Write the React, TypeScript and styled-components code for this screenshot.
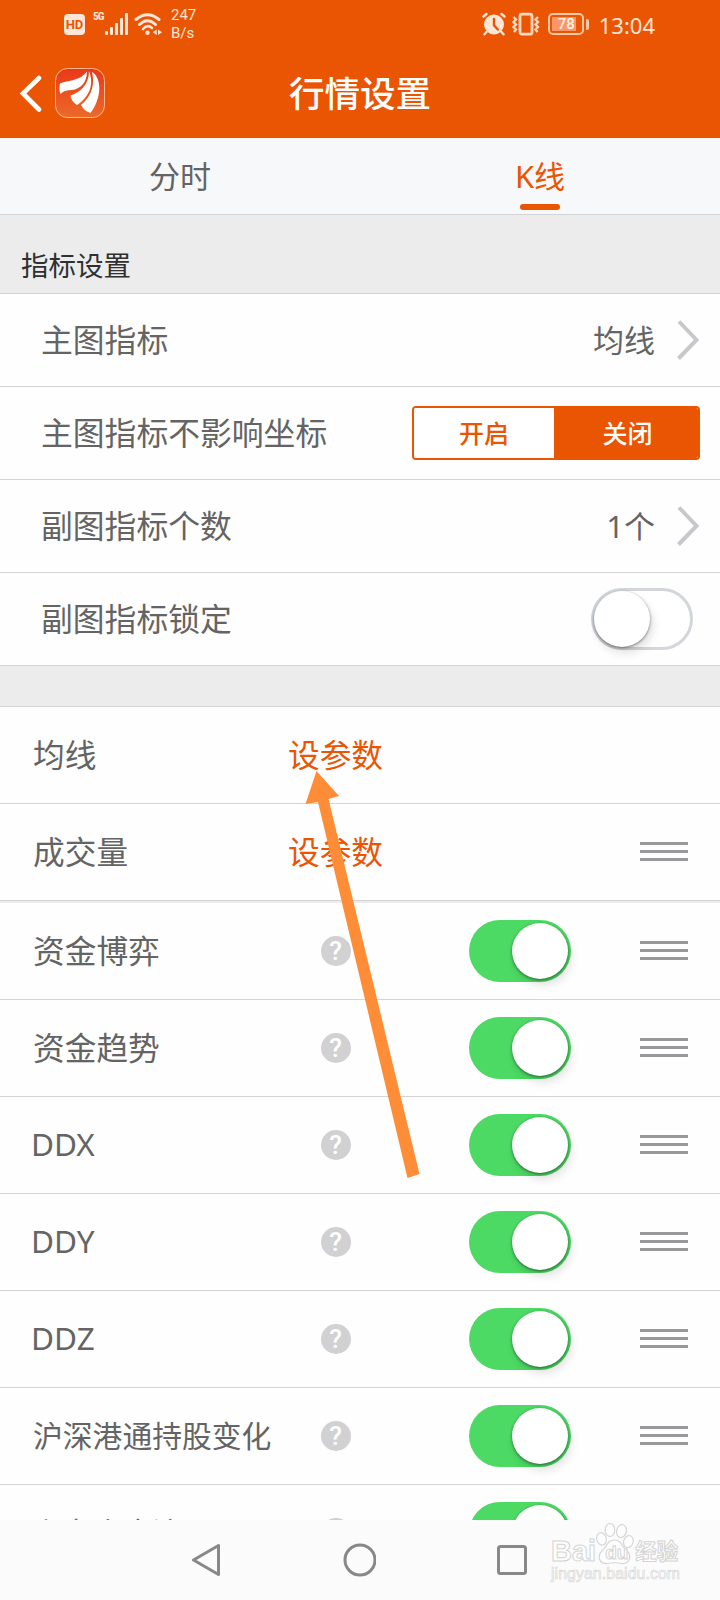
import React from "react";
import styled, { createGlobalStyle } from "styled-components";

const ORANGE = "#ea5504";
const LINE = "#d4d4d6";

const GlobalStyle = createGlobalStyle`
  * { box-sizing: border-box; }
  body {
    margin: 0;
    background: #fff;
    font-family: "Noto Sans", "Noto Sans CJK SC", sans-serif;
    color: #646464;
  }
`;

const Screen = styled.div`
  position: relative;
  display: flex;
  flex-direction: column;
  width: 720px;
  height: 1600px;
  overflow: hidden;
  background: #fefefe;
`;

const Header = styled.header`
  height: 138px;
  flex: none;
  background: ${ORANGE};
  color: #fff;
`;

const StatusBar = styled.div`
  display: flex;
  align-items: center;
  justify-content: space-between;
  height: 48px;
  padding: 0 65px 0 63px;
  color: #ffe6d6;
`;

const StatusGroup = styled.div`
  display: flex;
  align-items: center;
`;

const HdBadge = styled.span`
  width: 21px;
  height: 21px;
  margin: 1px 8px 0 1px;
  border-radius: 4px;
  background: #ffe6d6;
  color: ${ORANGE};
  font: 700 13px/22px Roboto, sans-serif;
  text-align: center;
`;

const NetworkType = styled.span`
  width: 12px;
  align-self: flex-start;
  padding-top: 4px;
  font: 700 11.5px/12px "Roboto Condensed", Roboto, sans-serif;
  letter-spacing: -1px;
`;

const Speed = styled.span`
  margin-left: 9px;
  font: 400 15px/18px Roboto, sans-serif;
`;

const Battery = styled.span`
  position: relative;
  display: flex;
  width: 36px;
  height: 22px;
  margin-left: 8px;
  padding: 2px;
  border: 2px solid #ffc7a6;
  border-radius: 5px;
  &::after {
    content: "";
    position: absolute;
    right: -7px;
    top: 4px;
    width: 3px;
    height: 11px;
    border-radius: 0 2px 2px 0;
    background: #ffc7a6;
  }
`;

const BatteryLevel = styled.span`
  width: 24px;
  height: 14px;
  background: #fb9668;
  color: #fff0e5;
  font: 500 15px/14px Roboto, sans-serif;
  text-indent: 6px;
  white-space: nowrap;
`;

const Clock = styled.span`
  margin-left: 15px;
  font-size: 22px;
  line-height: 30px;
  padding-top: 1px;
`;

const TitleBar = styled.div`
  display: grid;
  grid-template-columns: 110px 1fr 110px;
  align-items: center;
  height: 90px;
`;

const TitleLeft = styled.div`
  display: flex;
  align-items: center;
  gap: 12px;
  padding-left: 19px;
`;

const Title = styled.h1`
  margin: 0;
  font-size: 35.5px;
  font-weight: 500;
  line-height: 46px;
  text-align: center;
`;

const Tabs = styled.nav`
  display: grid;
  grid-template-columns: 1fr 1fr;
  flex: none;
  height: 77px;
  border-bottom: 1px solid ${LINE};
  background: #f7f8fa;
`;

const Tab = styled.div<{ $active?: boolean }>`
  display: flex;
  flex-direction: column;
  align-items: center;
  justify-content: space-between;
  padding: 17px 0 4px;
  color: ${(p) => (p.$active ? ORANGE : "#646464")};
  font-size: 31px;
  line-height: 42px;
  &::after {
    content: "";
    width: 40px;
    height: 6px;
    border-radius: 3px;
    background: ${(p) => (p.$active ? ORANGE : "transparent")};
  }
`;

const SectionHeader = styled.h2`
  flex: none;
  height: 79px;
  margin: 0;
  padding: 32px 21px 0;
  border-bottom: 1px solid ${LINE};
  background: #ececec;
  color: #303030;
  font-size: 27.5px;
  font-weight: 400;
  line-height: 38px;
`;

const SettingRow = styled.div`
  display: flex;
  align-items: center;
  justify-content: space-between;
  flex: none;
  height: 93px;
  padding: 0 20px 0 41px;
  border-bottom: 1px solid ${LINE};
  font-size: 31.8px;
  line-height: 46px;
`;

const Value = styled.div`
  display: flex;
  align-items: center;
  gap: 21px;
  font-size: 31px;
`;

const Segmented = styled.div`
  display: grid;
  grid-template-columns: 140px 1fr;
  width: 288px;
  height: 54px;
  border: 2px solid ${ORANGE};
  border-radius: 4px;
  overflow: hidden;
`;

const Segment = styled.div<{ $on?: boolean }>`
  display: flex;
  align-items: center;
  justify-content: center;
  padding-left: ${(p) => (p.$on ? 3 : 0)}px;
  background: ${(p) => (p.$on ? ORANGE : "#fff")};
  color: ${(p) => (p.$on ? "#fff" : ORANGE)};
  font-size: 25px;
  font-weight: 500;
  line-height: 36px;
`;

const Switch = styled.div<{ $on?: boolean }>`
  display: flex;
  justify-content: ${(p) => (p.$on ? "flex-end" : "flex-start")};
  width: 102px;
  height: 62px;
  padding: ${(p) => (p.$on ? "3px" : "0")};
  border: ${(p) => (p.$on ? "none" : "3px solid #d3d6da")};
  border-radius: 31px;
  background: ${(p) => (p.$on ? "#4cd964" : "#fff")};
`;

const Knob = styled.div`
  width: 56px;
  height: 56px;
  border-radius: 50%;
  background: #fff;
  box-shadow: 0 1px 3px rgba(0, 0, 0, 0.48), 3px 6px 10px rgba(0, 0, 0, 0.12);
`;

const SwitchSlot = styled.div`
  margin-right: 7px;
`;

const Divider = styled.div<{ $size: number }>`
  flex: none;
  height: ${(p) => p.$size}px;
  border-bottom: ${(p) => (p.$size > 10 ? `1px solid ${LINE}` : "none")};
  background: #ececec;
`;

const IndicatorRow = styled.div`
  display: grid;
  grid-template-columns: 242px 123px 1fr 48px;
  align-items: center;
  flex: none;
  height: 97px;
  padding: 0 32px;
  border-bottom: 1px solid ${LINE};
`;

const IndicatorName = styled.div<{ $small?: boolean }>`
  padding-left: 1px;
  font-size: ${(p) => (p.$small ? 29.8 : 31.7)}px;
  line-height: 46px;
  white-space: nowrap;
`;

const Latin = styled.div`
  margin: -2px 0 0 -2px;
  font-size: 31.5px;
  line-height: 46px;
`;

const MiddleCell = styled.div`
  display: flex;
  justify-content: center;
`;

const ParamLink = styled.a`
  color: ${ORANGE};
  font-size: 31.7px;
  line-height: 46px;
  white-space: nowrap;
`;

const Help = styled.span`
  width: 30px;
  height: 30px;
  border-radius: 50%;
  background: #d1d1d3;
  color: #fff;
  font: 500 26px/31px Roboto, sans-serif;
  text-align: center;
`;

const ToggleCell = styled.div`
  padding-left: 72px;
`;

const DragHandle = styled.div`
  display: flex;
  flex-direction: column;
  gap: 5px;
  padding-bottom: 2px;
`;

const DragLine = styled.span`
  height: 3px;
  background: #98989a;
`;

const NavBar = styled.footer`
  position: absolute;
  left: 0;
  right: 0;
  bottom: 0;
  display: flex;
  justify-content: space-between;
  align-items: center;
  height: 80px;
  padding: 0 190px;
  background: #fbfbfb;
`;

const Pointer = styled.svg`
  position: absolute;
  left: 300px;
  top: 768px;
`;

const Watermark = styled.div`
  position: absolute;
  left: 551px;
  top: 1520px;
  width: 134px;
  color: #fff;
  -webkit-text-stroke: 1px #d4d4d4;
`;

const Brand = styled.div`
  display: flex;
  align-items: flex-end;
  height: 46px;
  font: 700 29px/30px "Liberation Sans", "Noto Sans CJK SC", sans-serif;
`;

const BrandChinese = styled.span`
  font-size: 21.5px;
  line-height: 27px;
  white-space: nowrap;
`;

const Paw = styled.span`
  position: relative;
  width: 39px;
  height: 44px;
`;

const PawText = styled.span`
  position: absolute;
  left: 9px;
  top: 17px;
  font-size: 19px;
  line-height: 28px;
`;

const Site = styled.div`
  margin-top: -1px;
  font: 400 15.8px/18px "Liberation Sans", sans-serif;
  letter-spacing: 0.1px;
  -webkit-text-stroke: 0.7px #d8d8d8;
`;

const ChevronRight = () => (
  <svg width="24" height="42" viewBox="0 0 24 42" fill="none">
    <path d="M3 2.5 20.5 21 2.5 39.5" stroke="#c7c7cc" strokeWidth="4" />
  </svg>
);

const SignalIcon = () => (
  <svg width="24" height="24" viewBox="0 0 24 24" fill="#ffe6d6">
    <rect x="0" y="19" width="3" height="4" rx="1" />
    <rect x="5" y="15" width="3" height="8" rx="1" />
    <rect x="10" y="11" width="3" height="12" rx="1" />
    <rect x="15" y="6" width="3" height="17" rx="1" />
    <rect x="20" y="1" width="3" height="22" rx="1" />
  </svg>
);

const WifiIcon = () => (
  <svg width="28" height="24" viewBox="0 0 28 24" fill="none" stroke="#ffe6d6" strokeLinecap="round" style={{ marginLeft: 5 }}>
    <path d="M2 7.500Q13.500-2 25 7.500" strokeWidth="3" />
    <path d="M5.500 12.500Q13.500 5 21.500 12.500" strokeWidth="3" />
    <path d="M9 17Q13.500 12 18 16" strokeWidth="2.6" />
    <circle cx="13.500" cy="20.800" r="2.200" fill="#ffe6d6" stroke="none" />
    <path d="M22.700 17.500v5.500l-4-2.700zM24 17.500v5.500l4-2.700z" fill="#ffe6d6" stroke="none" />
  </svg>
);

const AlarmIcon = () => (
  <svg width="24" height="24" viewBox="0 0 24 24" fill="none" strokeLinecap="round">
    <circle cx="12" cy="12.500" r="10" fill="#ffe6d6" />
    <path d="M1.500 4.500 4.500 2M22.500 4.500 19.500 2M4.500 20l-2 2.300M19.500 20l2 2.300" stroke="#ffe6d6" strokeWidth="2.4" />
    <path d="M12 7v6.200l3.800 4.300" stroke={ORANGE} strokeWidth="2.4" />
  </svg>
);

const VibrateIcon = () => (
  <svg width="28" height="24" viewBox="0 0 28 24" fill="none" stroke="#ffd9bf" style={{ marginLeft: 6 }}>
    <rect x="8" y="2.200" width="12" height="20" rx="2" strokeWidth="2.8" />
    <path d="M1.500 5 4 7.500 1.500 10 4 12.500 1.500 15 4 17.500 2 20M26 5l-2.500 2.500L26 10l-2.500 2.500L26 15l-2.500 2.500L25.500 20" strokeWidth="2.400" />
  </svg>
);

const BackIcon = () => (
  <svg width="24" height="38" viewBox="0 0 24 38" fill="none">
    <path d="M20 4 4 19.500 20 35.500" stroke="#fff" strokeWidth="4.6" strokeLinecap="round" />
  </svg>
);

const AppLogo = () => (
  <svg width="50" height="50" viewBox="0 0 50 50">
    <defs>
      <linearGradient id="logoFill" x1="0" y1="0" x2="0" y2="1">
        <stop offset="0" stopColor="#e8391a" />
        <stop offset="1" stopColor="#ec6a28" />
      </linearGradient>
    </defs>
    <rect x="0.5" y="0.5" width="49" height="49" rx="12" fill="url(#logoFill)" stroke="#ffb68e" />
    <path d="M5 15.500C14 12 25 13 32 3.500C32 15 25 21 17 22Q9 22 5.500 26Q3.500 21 5 15.500Z" fill="#fff" />
    <path d="M15.500 27.500C26 24 34 16 34 3C40 18 33 30 22 37Q16 33 15.500 27.500Z" fill="#fff" />
    <path d="M26 37C37 28 40 16 37 4C47 10 47 30 35.500 45Q28 42 26 37Z" fill="#fff" />
  </svg>
);

const PawIcon = () => (
  <svg width="39" height="44" viewBox="0 0 39 44" fill="#fdfdfd" stroke="#d6d6d6" strokeWidth="1.2">
    <ellipse cx="5.500" cy="17" rx="4.700" ry="6.300" transform="rotate(-15 5 17)" />
    <ellipse cx="14" cy="8" rx="4.800" ry="6.500" />
    <ellipse cx="25.500" cy="9" rx="4.800" ry="6.500" transform="rotate(12 25 9)" />
    <ellipse cx="32.500" cy="19.500" rx="4.700" ry="6.200" transform="rotate(18 32 19)" />
    <path d="M18.500 18C11 18 11 25 6 29C1 34 3 42 11 41.500Q19 40 26 41.500C34 42 36 33 31 29C25 25 26 18 18.500 18Z" />
  </svg>
);

type Indicator = { name: string; param?: boolean; drag?: boolean; latin?: boolean; small?: boolean };

const fixedIndicators: Indicator[] = [
  { name: "均线", param: true },
  { name: "成交量", param: true, drag: true },
];

const indicators: Indicator[] = [
  { name: "资金博弈", drag: true },
  { name: "资金趋势", drag: true },
  { name: "DDX", drag: true, latin: true },
  { name: "DDY", drag: true, latin: true },
  { name: "DDZ", drag: true, latin: true },
  { name: "沪深港通持股变化", drag: true, small: true },
  { name: "主力资金流", drag: true, small: true },
];

const Indicators = ({ items }: { items: Indicator[] }) => (
  <>
    {items.map((item) => (
      <IndicatorRow key={item.name}>
        <IndicatorName $small={item.small}>{item.latin ? <Latin>{item.name}</Latin> : item.name}</IndicatorName>
        <MiddleCell>{item.param ? <ParamLink>设参数</ParamLink> : <Help>?</Help>}</MiddleCell>
        <ToggleCell>
          {!item.param && (
            <Switch $on>
              <Knob />
            </Switch>
          )}
        </ToggleCell>
        {item.drag && (
          <DragHandle>
            <DragLine />
            <DragLine />
            <DragLine />
          </DragHandle>
        )}
      </IndicatorRow>
    ))}
  </>
);

export default function App() {
  return (
    <Screen>
      <GlobalStyle />
      <Header>
        <StatusBar>
          <StatusGroup>
            <HdBadge>HD</HdBadge>
            <NetworkType>5G</NetworkType>
            <SignalIcon />
            <WifiIcon />
            <Speed>
              247
              <br />
              B/s
            </Speed>
          </StatusGroup>
          <StatusGroup>
            <AlarmIcon />
            <VibrateIcon />
            <Battery>
              <BatteryLevel>78</BatteryLevel>
            </Battery>
            <Clock>13:04</Clock>
          </StatusGroup>
        </StatusBar>
        <TitleBar>
          <TitleLeft>
            <BackIcon />
            <AppLogo />
          </TitleLeft>
          <Title>行情设置</Title>
        </TitleBar>
      </Header>
      <Tabs>
        <Tab>分时</Tab>
        <Tab $active>K线</Tab>
      </Tabs>
      <SectionHeader>指标设置</SectionHeader>
      <SettingRow>
        主图指标
        <Value>
          均线
          <ChevronRight />
        </Value>
      </SettingRow>
      <SettingRow>
        主图指标不影响坐标
        <Segmented>
          <Segment>开启</Segment>
          <Segment $on>关闭</Segment>
        </Segmented>
      </SettingRow>
      <SettingRow>
        副图指标个数
        <Value>
          1个
          <ChevronRight />
        </Value>
      </SettingRow>
      <SettingRow>
        副图指标锁定
        <SwitchSlot>
          <Switch>
            <Knob />
          </Switch>
        </SwitchSlot>
      </SettingRow>
      <Divider $size={41} />
      <Indicators items={fixedIndicators} />
      <Divider $size={2} />
      <Indicators items={indicators} />
      <NavBar>
        <svg width="32" height="36" viewBox="0 0 32 36" fill="none" stroke="#888" strokeWidth="3" strokeLinejoin="round">
          <path d="M3.500 18 28.500 3.500V32.500Z" />
        </svg>
        <svg width="34" height="34" viewBox="0 0 34 34" fill="none" stroke="#888" strokeWidth="3">
          <circle cx="18" cy="17" r="15" />
        </svg>
        <svg width="34" height="34" viewBox="0 0 34 34" fill="none" stroke="#888" strokeWidth="3">
          <rect x="2.500" y="3.500" width="27" height="27" rx="2" />
        </svg>
      </NavBar>
      <Watermark>
        <Brand>
          Bai
          <Paw>
            <PawIcon />
            <PawText>du</PawText>
          </Paw>
          <BrandChinese>经验</BrandChinese>
        </Brand>
        <Site>jingyan.baidu.com</Site>
      </Watermark>
      <Pointer width="124" height="414" viewBox="0 0 124 414">
        <path d="M16.500 3 39 28 28.500 31 119.500 406 107.500 410 18 34 5.500 36Z" fill="#ff8c37" />
      </Pointer>
    </Screen>
  );
}
